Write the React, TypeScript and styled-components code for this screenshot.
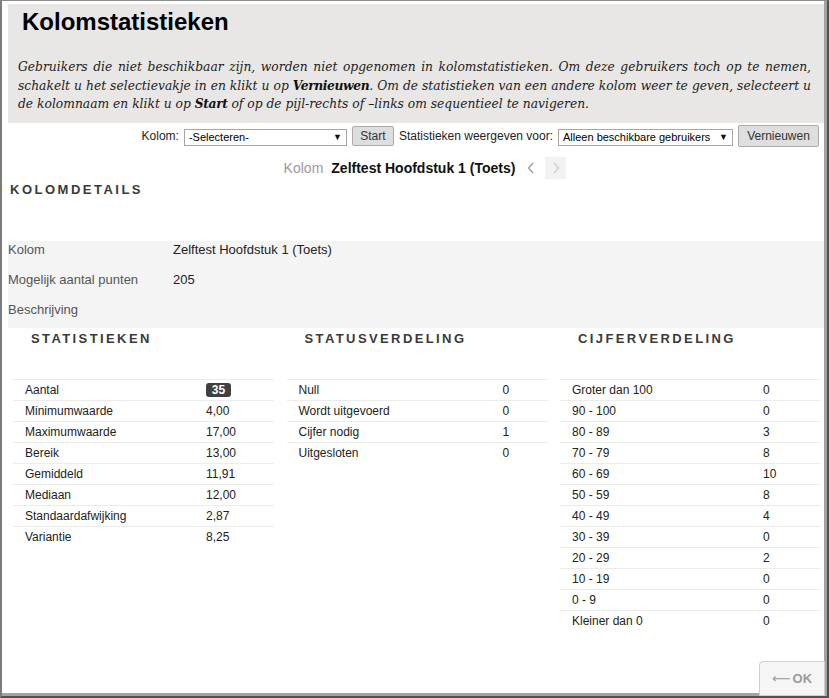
import React from 'react';
import styled, { createGlobalStyle } from 'styled-components';

const GlobalStyle = createGlobalStyle`
    html, body {
        margin: 0;
        padding: 0;
        background: #ffffff;
    }
    body {
        font-family: 'Liberation Sans', Arial, sans-serif;
        color: #222;
    }
`;

type StatRow = { label: string; value: string; badge?: boolean };

const statistieken: StatRow[] = [
    { label: 'Aantal', value: '35', badge: true },
    { label: 'Minimumwaarde', value: '4,00' },
    { label: 'Maximumwaarde', value: '17,00' },
    { label: 'Bereik', value: '13,00' },
    { label: 'Gemiddeld', value: '11,91' },
    { label: 'Mediaan', value: '12,00' },
    { label: 'Standaardafwijking', value: '2,87' },
    { label: 'Variantie', value: '8,25' },
];

const statusverdeling: StatRow[] = [
    { label: 'Null', value: '0' },
    { label: 'Wordt uitgevoerd', value: '0' },
    { label: 'Cijfer nodig', value: '1' },
    { label: 'Uitgesloten', value: '0' },
];

const cijferverdeling: StatRow[] = [
    { label: 'Groter dan 100', value: '0' },
    { label: '90 - 100', value: '0' },
    { label: '80 - 89', value: '3' },
    { label: '70 - 79', value: '8' },
    { label: '60 - 69', value: '10' },
    { label: '50 - 59', value: '8' },
    { label: '40 - 49', value: '4' },
    { label: '30 - 39', value: '0' },
    { label: '20 - 29', value: '2' },
    { label: '10 - 19', value: '0' },
    { label: '0 - 9', value: '0' },
    { label: 'Kleiner dan 0', value: '0' },
];

const columns = [
    { title: 'STATISTIEKEN', rows: statistieken, labelWidth: 193 },
    { title: 'STATUSVERDELING', rows: statusverdeling, labelWidth: 216 },
    { title: 'CIJFERVERDELING', rows: cijferverdeling, labelWidth: 203 },
];

const App: React.FC = () => {
    return (
        <>
            <GlobalStyle />
            <Frame>
                <Shell>
                    <Header>
                        <Title>Kolomstatistieken</Title>
                        <Intro>
                            <IntroLine $full>
                                Gebruikers die niet beschikbaar zijn, worden niet opgenomen in kolomstatistieken. Om deze gebruikers toch op te nemen,
                            </IntroLine>
                            <IntroLine $full>
                                schakelt u het selectievakje in en klikt u op <b>Vernieuwen</b>. Om de statistieken van een andere kolom weer te geven, selecteert u
                            </IntroLine>
                            <IntroLine>
                                de kolomnaam en klikt u op <b>Start</b> of op de pijl-rechts of –links om sequentieel te navigeren.
                            </IntroLine>
                        </Intro>
                    </Header>

                    <Toolbar>
                        <ToolLabel>Kolom:</ToolLabel>
                        <FakeSelect $width={163}>
                            <span>-Selecteren-</span>
                            <Caret>▼</Caret>
                        </FakeSelect>
                        <Button $height={20} $width={42}>Start</Button>
                        <ToolLabel>Statistieken weergeven voor:</ToolLabel>
                        <FakeSelect $width={175}>
                            <span>Alleen beschikbare gebruikers</span>
                            <Caret>▼</Caret>
                        </FakeSelect>
                        <Button $height={22} $width={81}>Vernieuwen</Button>
                    </Toolbar>

                    <Nav>
                        <NavLabel>Kolom</NavLabel>
                        <NavName>Zelftest Hoofdstuk 1 (Toets)</NavName>
                        <NavArrow>
                            <svg width="8" height="12" viewBox="0 0 8 12">
                                <path d="M6 1 L1.5 6 L6 11" fill="none" stroke="#9a9a9a" strokeWidth="1.3" />
                            </svg>
                        </NavArrow>
                        <NavArrow $boxed>
                            <svg width="8" height="12" viewBox="0 0 8 12">
                                <path d="M2 1 L6.5 6 L2 11" fill="none" stroke="#cfcfcf" strokeWidth="1.3" />
                            </svg>
                        </NavArrow>
                    </Nav>

                    <SectionTitle>KOLOMDETAILS</SectionTitle>

                    <Details>
                        <DetailRow>
                            <DetailLabel>Kolom</DetailLabel>
                            <DetailValue>Zelftest Hoofdstuk 1 (Toets)</DetailValue>
                        </DetailRow>
                        <DetailRow>
                            <DetailLabel>Mogelijk aantal punten</DetailLabel>
                            <DetailValue>205</DetailValue>
                        </DetailRow>
                        <DetailRow>
                            <DetailLabel>Beschrijving</DetailLabel>
                            <DetailValue />
                        </DetailRow>
                    </Details>

                    <Columns>
                        {columns.map((col) => (
                            <Column key={col.title}>
                                <ColumnTitle>{col.title}</ColumnTitle>
                                <Table>
                                    {col.rows.map((row) => (
                                        <Row key={row.label}>
                                            <RowLabel $width={col.labelWidth}>{row.label}</RowLabel>
                                            <RowValue>{row.badge ? <Badge>{row.value}</Badge> : row.value}</RowValue>
                                        </Row>
                                    ))}
                                </Table>
                            </Column>
                        ))}
                    </Columns>

                    <OkButton>
                        <OkArrow>⟵</OkArrow>OK
                    </OkButton>
                </Shell>
            </Frame>
        </>
    );
};

const Frame = styled.div`
    width: 829px;
    height: 698px;
    box-sizing: border-box;
    border-top: 1px solid #8c8c8c;
    border-left: 2px solid #7c7c7c;
    border-right: 2px solid #505050;
    border-bottom: 2px solid #505050;
    overflow: hidden;
`;

const Shell = styled.div`
    position: relative;
    height: 100%;
    box-sizing: border-box;
    padding: 3px 0 0 6px;
    border-right: 3px solid #a3a3a3;
    border-bottom: 3px solid #a3a3a3;
    background: #ffffff;
`;

const Header = styled.div`
    background: #e8e7e5;
    height: 119px;
    box-sizing: border-box;
    padding: 4px 0 0 14px;
`;

const Title = styled.h1`
    margin: 0;
    font-family: 'Liberation Sans', Arial, sans-serif;
    font-size: 24px;
    line-height: 28px;
    font-weight: bold;
    color: #000;
`;

const Intro = styled.div`
    margin: 22px 0 0 -4px;
    width: 793px;
    font-family: 'DejaVu Serif', Georgia, serif;
    font-style: italic;
    font-size: 12.3px;
    line-height: 18.7px;
    color: #222;

    b {
        font-weight: bold;
        color: #111;
        letter-spacing: -0.4px;
    }
`;

const IntroLine = styled.div<{ $full?: boolean }>`
    white-space: nowrap;
    text-align: ${(p) => (p.$full ? 'justify' : 'left')};
    text-align-last: ${(p) => (p.$full ? 'justify' : 'left')};
`;

const Toolbar = styled.div`
    display: flex;
    align-items: center;
    justify-content: flex-end;
    gap: 5px;
    height: 24px;
    padding-right: 5px;
    margin-top: 1px;
`;

const ToolLabel = styled.span`
    font-size: 12px;
    color: #222;
`;

const FakeSelect = styled.div<{ $width: number }>`
    display: flex;
    align-items: center;
    justify-content: space-between;
    width: ${(p) => p.$width}px;
    height: 17px;
    box-sizing: border-box;
    margin-top: 2px;
    padding: 0 4px 0 4px;
    border: 1px solid #a6a6a6;
    background: #ffffff;
    font-size: 11px;
    color: #000;
`;

const Caret = styled.span`
    font-size: 9px;
    color: #111;
`;

const Button = styled.div<{ $height: number; $width: number }>`
    display: flex;
    align-items: center;
    justify-content: center;
    width: ${(p) => p.$width}px;
    height: ${(p) => p.$height}px;
    box-sizing: border-box;
    border: 1px solid #ababab;
    border-radius: 2px;
    background: #dedede;
    font-size: 12px;
    color: #333;
`;

const Nav = styled.div`
    display: flex;
    align-items: center;
    justify-content: center;
    gap: 8px;
    height: 22px;
    margin-top: 9px;
    padding-left: 18px;
`;

const NavLabel = styled.span`
    font-size: 14px;
    color: #999;
`;

const NavName = styled.span`
    font-size: 14px;
    font-weight: bold;
    color: #111;
    margin-right: 2px;
`;

const NavArrow = styled.span<{ $boxed?: boolean }>`
    display: flex;
    align-items: center;
    justify-content: center;
    width: ${(p) => (p.$boxed ? '21px' : '12px')};
    height: 22px;
    background: ${(p) => (p.$boxed ? '#f2f2f2' : 'transparent')};
`;

const SectionTitle = styled.h2`
    margin: 3px 0 0 2px;
    font-size: 13px;
    line-height: 16px;
    font-weight: bold;
    letter-spacing: 2.5px;
    color: #3a3a3a;
`;

const Details = styled.div`
    margin-top: 43px;
    height: 87px;
    box-sizing: border-box;
    padding-top: 1px;
    background: #f4f4f4;
    overflow: hidden;
`;

const DetailRow = styled.div`
    display: flex;
    height: 30px;
    line-height: 16px;
    font-size: 13px;
`;

const DetailLabel = styled.span`
    width: 165px;
    color: #555;
`;

const DetailValue = styled.span`
    color: #222;
`;

const Columns = styled.div`
    display: grid;
    grid-template-columns: repeat(3, 261px);
    column-gap: 12.5px;
    margin-left: 5px;
`;

const Column = styled.div`
    display: flex;
    flex-direction: column;
`;

const ColumnTitle = styled.h3`
    margin: 0;
    height: 51px;
    box-sizing: border-box;
    padding: 3px 0 0 18px;
    font-size: 13px;
    line-height: 16px;
    font-weight: bold;
    letter-spacing: 2.4px;
    color: #3a3a3a;
`;

const Table = styled.div`
    display: flex;
    flex-direction: column;
`;

const Row = styled.div`
    display: flex;
    align-items: center;
    height: 21px;
    box-sizing: border-box;
    border-top: 1px solid #ececec;
    font-size: 12px;
`;

const RowLabel = styled.span<{ $width: number }>`
    width: ${(p) => p.$width}px;
    box-sizing: border-box;
    padding-left: 12px;
    color: #222;
`;

const RowValue = styled.span`
    color: #222;
`;

const Badge = styled.span`
    display: inline-block;
    min-width: 25px;
    height: 14px;
    line-height: 14px;
    box-sizing: border-box;
    border-radius: 3px;
    background: #404040;
    color: #ffffff;
    font-weight: bold;
    font-size: 12px;
    text-align: center;
`;

const OkButton = styled.div`
    position: absolute;
    right: -1px;
    bottom: -3px;
    width: 66px;
    height: 35px;
    box-sizing: border-box;
    display: flex;
    align-items: center;
    justify-content: center;
    gap: 2px;
    border: 1px solid #cfcfcf;
    border-top-left-radius: 4px;
    background: #f5f5f5;
    font-size: 13px;
    font-weight: bold;
    color: #9a9a9a;
`;

const OkArrow = styled.span`
    font-family: 'DejaVu Sans', sans-serif;
    font-weight: normal;
    font-size: 13px;
`;

export default App;
